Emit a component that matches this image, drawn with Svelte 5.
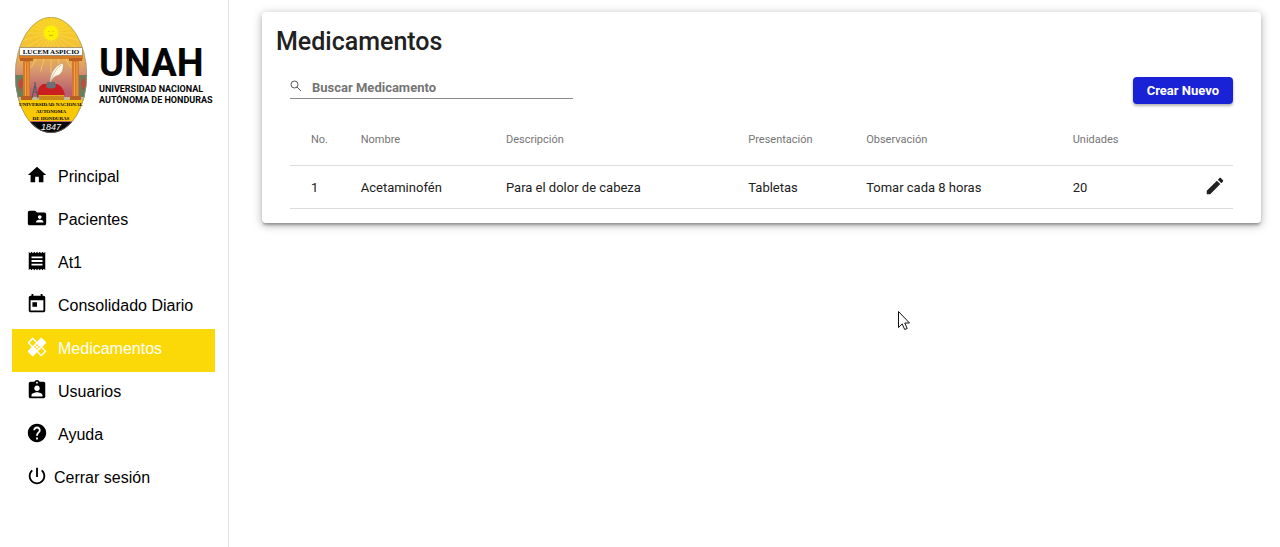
<script>
  const menu = [
    { label: 'Principal', d: 'M10 20v-6h4v6h5v-8h3L12 3 2 12h3v8z' },
    { label: 'Pacientes', d: 'M20 6h-8l-2-2H4c-1.1 0-1.99.9-1.99 2L2 18c0 1.1.9 2 2 2h16c1.1 0 2-.9 2-2V8c0-1.1-.9-2-2-2zm-5 3c1.1 0 2 .9 2 2s-.9 2-2 2-2-.9-2-2 .9-2 2-2zm4 8h-8v-1c0-1.33 2.67-2 4-2s4 .67 4 2v1z' },
    { label: 'At1', d: 'M18 17H6v-2h12v2zm0-4H6v-2h12v2zm0-4H6V7h12v2zM3 22l1.5-1.5L6 22l1.5-1.5L9 22l1.5-1.5L12 22l1.5-1.5L15 22l1.5-1.5L18 22l1.5-1.5L21 22V2l-1.5 1.5L18 2l-1.5 1.5L15 2l-1.5 1.5L12 2l-1.5 1.5L9 2 7.5 3.5 6 2 4.5 3.5 3 2v20z' },
    { label: 'Consolidado Diario', d: 'M19 3h-1V1h-2v2H8V1H6v2H5c-1.11 0-1.99.9-1.99 2L3 19c0 1.1.89 2 2 2h14c1.1 0 2-.9 2-2V5c0-1.1-.9-2-2-2zm0 16H5V8h14v11zM7 10h5v5H7z' },
    { label: 'Medicamentos', active: true, d: 'M17.73 12.02l3.98-3.98c.39-.39.39-1.02 0-1.41l-4.34-4.34c-.39-.39-1.02-.39-1.41 0l-3.98 3.98L8 2.29C7.8 2.1 7.55 2 7.29 2c-.25 0-.51.1-.7.29L2.25 6.63c-.39.39-.39 1.02 0 1.41l3.98 3.98L2.25 16c-.39.39-.39 1.02 0 1.41l4.34 4.34c.39.39 1.02.39 1.41 0l3.98-3.98 3.98 3.98c.2.2.45.29.71.29.26 0 .51-.1.71-.29l4.34-4.34c.39-.39.39-1.02 0-1.41l-3.99-3.98zM12 9c.55 0 1 .45 1 1s-.45 1-1 1-1-.45-1-1 .45-1 1-1zm-4.71 1.96L3.66 7.34l3.63-3.63 3.62 3.62-3.62 3.63zM10 13c-.55 0-1-.45-1-1s.45-1 1-1 1 .45 1 1-.45 1-1 1zm2 2c-.55 0-1-.45-1-1s.45-1 1-1 1 .45 1 1-.45 1-1 1zm2-4c.55 0 1 .45 1 1s-.45 1-1 1-1-.45-1-1 .45-1 1-1zm2.66 9.34l-3.63-3.62 3.63-3.63 3.62 3.62-3.62 3.63z' },
    { label: 'Usuarios', d: 'M19 3h-4.18C14.4 1.84 13.3 1 12 1c-1.3 0-2.4.84-2.82 2H5c-1.1 0-2 .9-2 2v14c0 1.1.9 2 2 2h14c1.1 0 2-.9 2-2V5c0-1.1-.9-2-2-2zm-7 0c.55 0 1 .45 1 1s-.45 1-1 1-1-.45-1-1 .45-1 1-1zm0 4c1.66 0 3 1.34 3 3s-1.34 3-3 3-3-1.34-3-3 1.34-3 3-3zm6 12H6v-1.4c0-2 4-3.1 6-3.1s6 1.1 6 3.1V19z' },
    { label: 'Ayuda', d: 'M12 2C6.48 2 2 6.48 2 12s4.48 10 10 10 10-4.48 10-10S17.52 2 12 2zm1 17h-2v-2h2v2zm2.07-7.75l-.9.92C13.45 12.9 13 13.5 13 15h-2v-.5c0-1.1.45-2.1 1.17-2.83l1.24-1.26c.37-.36.59-.86.59-1.41 0-1.1-.9-2-2-2s-2 .9-2 2H8c0-2.21 1.79-4 4-4s4 1.79 4 4c0 .88-.36 1.68-.93 2.25z' },
  ];

  const columns = [
    { title: 'No.', width: 7.5 },
    { title: 'Nombre', width: 15.4 },
    { title: 'Descripción', width: 25.7 },
    { title: 'Presentación', width: 12.5 },
    { title: 'Observación', width: 21.9 },
    { title: 'Unidades', width: 11 },
  ];

  const rows = [['1', 'Acetaminofén', 'Para el dolor de cabeza', 'Tabletas', 'Tomar cada 8 horas', '20']];
  const rays = Array.from({ length: 24 }, (_, i) => i * 15);
</script>

<div class="shell">
  <aside class="sidebar">
    <div class="brand">
      <svg class="seal" viewBox="0 0 72 116" aria-hidden="true">
        <defs>
          <clipPath id="oval"><ellipse cx="36" cy="58" rx="36" ry="58" /></clipPath>
          <linearGradient id="sky" x1="0" y1="0" x2="0" y2="1">
            <stop offset="0" stop-color="#f8d21c" />
            <stop offset="0.28" stop-color="#f3be3c" />
            <stop offset="0.45" stop-color="#d99a70" />
            <stop offset="0.65" stop-color="#b8606e" />
          </linearGradient>
        </defs>
        <g clip-path="url(#oval)">
          <rect width="72" height="116" fill="url(#sky)" />
          <g stroke="#f7e04a" stroke-width="0.6">
            {#each rays as angle}
              <line x1="36" y1="16" x2="36" y2="-24" transform="rotate({angle} 36 16)" />
            {/each}
          </g>
          <circle cx="36" cy="16" r="7.5" fill="#fdf000" />
          <path d="M33.5 14.5h1M37.5 14.5h1M34 18q2 1.600 4 0" stroke="#c99b00" stroke-width="0.8" fill="none" />
          <path d="M0 58h8v26H0zM64 58h8v26h-8z" fill="#67805b" />
          <path d="M3 66l4-6 1 8-3 6zM66 66l3-7 2 8-3 7z" fill="#c4483f" />
          <rect x="0" y="80" width="72" height="10" fill="#c1b894" />
          <path d="M4 38h64v4H4z" fill="#d57e27" />
          <path d="M8 42h7v38H8zM57 42h7v38h-7z" fill="#d57628" />
          <path d="M5 41h13v3H5zM54 41h13v3H54zM6 79h11v4H6zM55 79h11v4H55z" fill="#b85f21" />
          <path d="M10.500 45v34M13 45v34M59.500 45v34M62 45v34" stroke="#f0a54b" stroke-width="1" />
          <rect x="4.500" y="30.500" width="63" height="8" fill="#fff" stroke="#7c6b50" stroke-width="0.6" />
          <path d="M24 78h25v8H24z" fill="#e8a91b" />
          <path d="M24 80h25M24 82h25" stroke="#9b5b13" stroke-width="0.8" />
          <path d="M22 78q1-9 6-11h14q6 2 8 11z" fill="#c91f20" />
          <path d="M32 65h8l1 5q-5 3-10 0z" fill="#6b7077" />
          <path d="M35 65c0-8 4-16 13-19 1 6-1 12-7 13-2 1-4 3-5 6z" fill="#fff8e6" stroke="#a98b6d" stroke-width="0.5" />
          <path d="M36 65c1-7 5-13 10-17" fill="none" stroke="#a98b6d" stroke-width="0.5" />
          <path d="M20 65v3l-3 13M20 68l3 13M18 75h4" fill="none" stroke="#555b60" stroke-width="1.200" />
          <rect y="83" width="72" height="21" fill="#f8c900" />
          <rect y="105" width="72" height="11" fill="#080808" />
        </g>
        <ellipse cx="36" cy="58" rx="35.700" ry="57.700" fill="none" stroke="#97917e" stroke-width="0.6" />
        <g text-anchor="middle" font-family="Liberation Serif, serif" font-weight="700">
          <text x="36" y="37" font-size="7">LUCEM ASPICIO</text>
          <text x="36" y="89" font-size="5">UNIVERSIDAD NACIONAL</text>
          <text x="36" y="96" font-size="5">AUTONOMA</text>
          <text x="36" y="103" font-size="5">DE HONDURAS</text>
        </g>
        <text x="36" y="113" font-size="9" font-style="italic" text-anchor="middle" fill="#fff" font-family="Liberation Sans, sans-serif">1847</text>
      </svg>
      <div class="wordmark">
        <strong>UNAH</strong>
        <span>UNIVERSIDAD NACIONAL</span>
        <span>AUTÓNOMA DE HONDURAS</span>
      </div>
    </div>

    <nav>
      {#each menu as item}
        <a href="#{item.label}" class:active={item.active}>
          <svg viewBox="0 0 24 24" aria-hidden="true"><path d={item.d} /></svg>
          <span>{item.label}</span>
        </a>
      {/each}
      <a href="#salir" class="logout">
        <svg viewBox="0 0 24 24" aria-hidden="true"><path d="M13 3h-2v10h2V3zm4.830 2.170l-1.420 1.420C17.990 7.860 19 9.810 19 12c0 3.870-3.130 7-7 7s-7-3.130-7-7c0-2.190 1.010-4.140 2.580-5.420L6.170 5.170C4.230 6.820 3 9.260 3 12c0 4.970 4.030 9 9 9s9-4.030 9-9c0-2.740-1.230-5.180-3.170-6.830z" /></svg>
        <span>Cerrar sesión</span>
      </a>
    </nav>
  </aside>

  <main>
    <section class="card">
      <h1>Medicamentos</h1>
      <div class="tools">
        <label class="search">
          <svg viewBox="0 0 12 12" aria-hidden="true"><circle cx="4.500" cy="4.500" r="3.500" /><path d="M7 7l4 4" /></svg>
          <input type="text" placeholder="Buscar Medicamento" aria-label="Buscar Medicamento" />
        </label>
        <button class="create" type="button">Crear Nuevo</button>
      </div>
      <table>
        <colgroup>
          {#each columns as column}<col style="width: {column.width}%" />{/each}
          <col />
        </colgroup>
        <thead>
          <tr>
            {#each columns as column}<th scope="col">{column.title}</th>{/each}
            <th></th>
          </tr>
        </thead>
        <tbody>
          {#each rows as row}
            <tr>
              {#each row as cell}<td>{cell}</td>{/each}
              <td class="action">
                <button type="button" aria-label="Editar">
                  <svg viewBox="0 0 24 24" aria-hidden="true"><path d="M3 17.250V21h3.750L17.810 9.940l-3.750-3.750L3 17.250zM20.710 7.040c.39-.39.39-1.020 0-1.410l-2.340-2.340c-.39-.39-1.020-.39-1.410 0l-1.830 1.830 3.750 3.750 1.830-1.830z" /></svg>
                </button>
              </td>
            </tr>
          {/each}
        </tbody>
      </table>
    </section>
  </main>

  <svg class="pointer" viewBox="0 0 12 19" aria-hidden="true">
    <path d="M0.500 0.500v16l3.700-3.600 2.500 5.600 2.500-1-2.400-5.500h4.700z" />
  </svg>
</div>

<style>
  :global(body) {
    margin: 0;
    background: #fff;
  }
  .shell {
    display: flex;
    min-height: 100vh;
    position: relative;
    font-family: Roboto, sans-serif;
    color: #212121;
  }
  .sidebar {
    box-sizing: border-box;
    flex: 0 0 229px;
    border-right: 1px solid #e0e0e0;
    padding: 17px 13px 0 12px;
  }
  .brand {
    display: flex;
    gap: 12px;
    margin: 0 0 24px 3px;
  }
  .seal {
    flex: none;
    width: 72px;
    height: 116px;
  }
  .wordmark {
    display: flex;
    flex-direction: column;
    min-width: 0;
    padding-top: 26px;
    color: #050505;
    white-space: nowrap;
  }
  .wordmark strong {
    font-size: 38px;
    line-height: 41px;
    font-weight: 700;
  }
  .wordmark span {
    font-size: 9px;
    line-height: 11px;
    font-weight: 700;
  }
  nav {
    display: flex;
    flex-direction: column;
  }
  nav a {
    display: flex;
    align-items: center;
    gap: 10px;
    height: 43px;
    padding-left: 14px;
    color: #000;
    font: 16px/20px 'Liberation Sans', Arial, sans-serif;
    text-decoration: none;
  }
  nav svg {
    width: 22px;
    height: 22px;
    margin-bottom: 8px;
    fill: currentColor;
  }
  nav a span {
    padding-bottom: 4px;
  }
  nav a.active {
    background: #fbd908;
    color: #fff;
  }
  nav a.logout {
    gap: 6px;
  }
  main {
    flex: 1;
    min-width: 0;
    padding: 12px 19px 24px 33px;
  }
  .card {
    padding: 14px 28px;
    border-radius: 4px;
    background: #fff;
    box-shadow: 0 3px 3px -1px rgba(0, 0, 0, 0.3), 0 2px 8px 1px rgba(0, 0, 0, 0.25);
  }
  h1 {
    margin: 0 0 0 -14px;
    font-size: 25px;
    line-height: 32px;
    font-weight: 500;
  }
  .tools {
    display: flex;
    justify-content: space-between;
    align-items: flex-start;
    padding-top: 19px;
  }
  .search {
    box-sizing: border-box;
    display: flex;
    gap: 10px;
    width: 30%;
    height: 22px;
    border-bottom: 1px solid #8c8c8c;
  }
  .search svg {
    flex: none;
    width: 12px;
    height: 12px;
    margin-top: 3px;
    fill: none;
    stroke: #555;
    stroke-width: 1;
  }
  .search input {
    flex: 1;
    min-width: 0;
    border: 0;
    padding: 0;
    background: none;
    outline: 0;
    font: 700 13px/20px Roboto, sans-serif;
    color: #333;
  }
  .search input::placeholder {
    color: #757575;
    opacity: 1;
  }
  .create {
    height: 27px;
    padding: 0 14px;
    border: 0;
    border-radius: 4px;
    background: #1a22d6;
    color: #fff;
    font: 700 13px/27px Roboto, sans-serif;
    box-shadow: 0 2px 3px rgba(0, 0, 0, 0.3);
    white-space: nowrap;
  }
  table {
    width: 100%;
    margin-top: 9px;
    border-collapse: collapse;
    table-layout: fixed;
    text-align: left;
  }
  th,
  td {
    padding: 0;
    border-bottom: 1px solid #dcdcdc;
  }
  th {
    height: 52px;
    font-size: 11px;
    font-weight: 400;
    color: #757575;
  }
  td {
    height: 42px;
    font-size: 13px;
  }
  th:first-child,
  td:first-child {
    padding-left: 21px;
  }
  .action {
    text-align: right;
  }
  .action button {
    display: inline-flex;
    padding: 0 7px;
    border: 0;
    background: none;
    color: inherit;
  }
  .action svg {
    width: 22px;
    height: 22px;
    fill: currentColor;
  }
  .pointer {
    position: absolute;
    left: 898px;
    top: 311px;
    width: 12px;
    height: 19px;
    fill: #fff;
    stroke: #111;
  }
</style>
